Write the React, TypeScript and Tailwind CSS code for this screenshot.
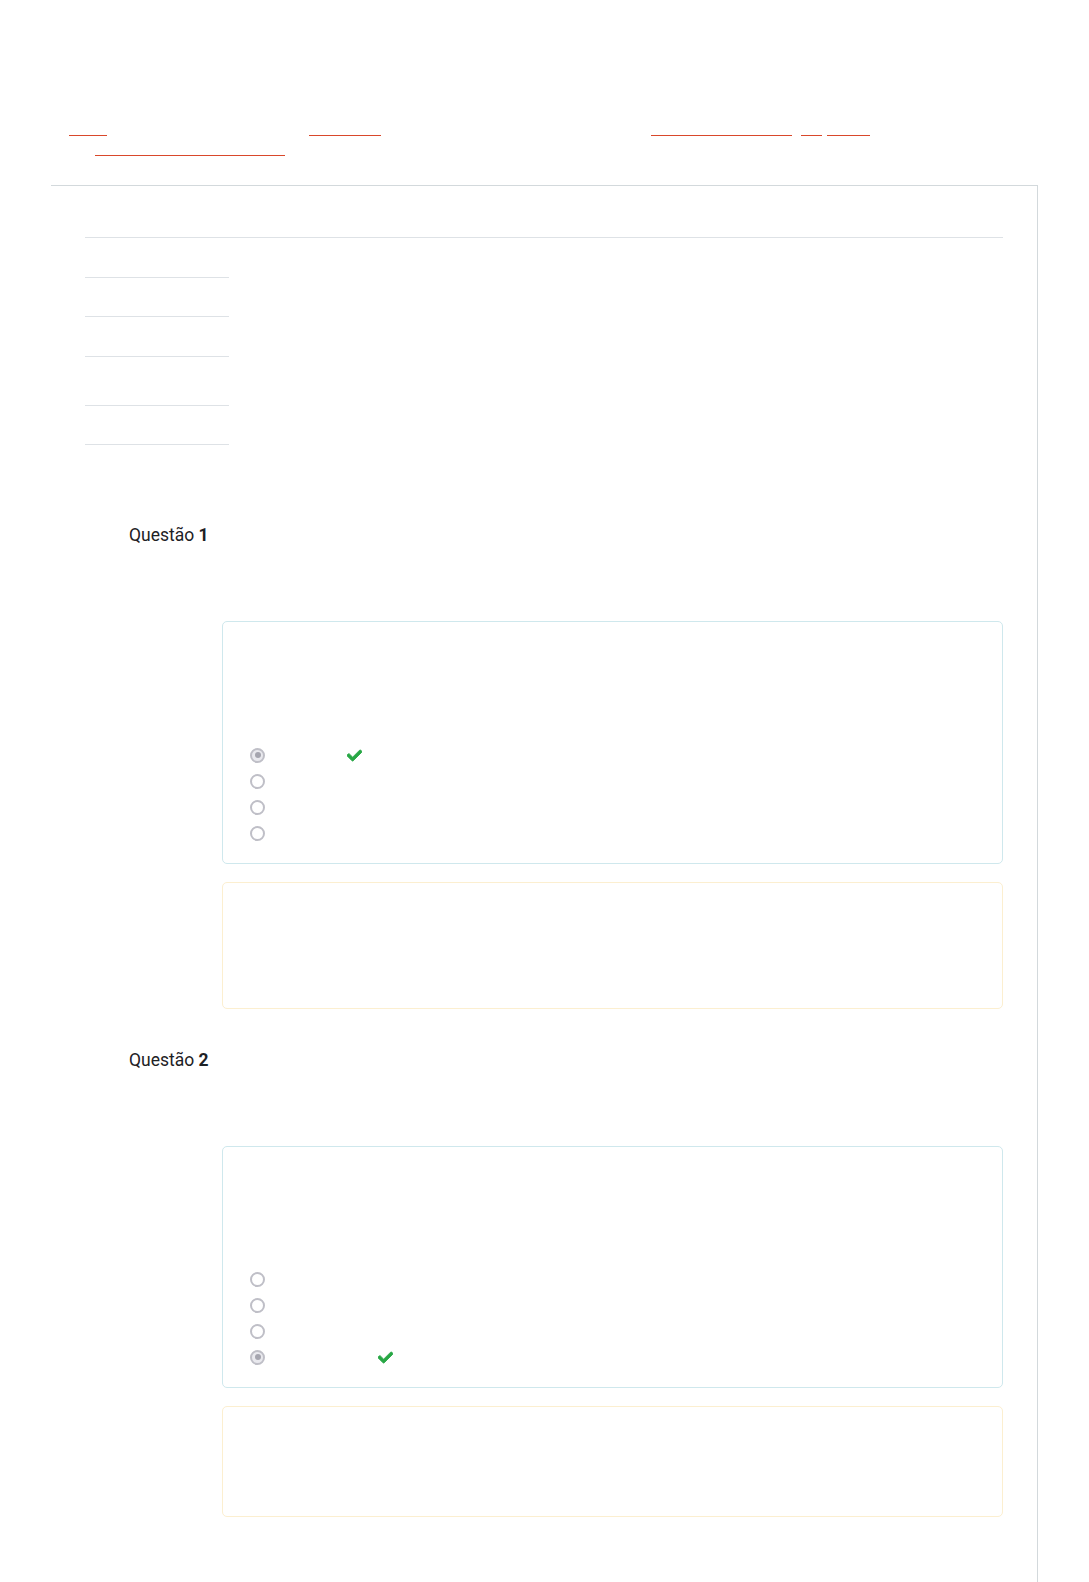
import { FaCheck } from "react-icons/fa";

const Link = ({ w, ml }: { w: string; ml: string }) => (
  <span className={`block h-px bg-[#d9482b] ${w} ${ml}`}></span>
);

const Radio = ({ checked }: { checked?: boolean }) => (
  <span
    className={`flex items-center justify-center w-[15px] h-[15px] rounded-full border-2 border-[#bfbfc7] shrink-0 ${
      checked ? "bg-[#e9e9ee]" : "bg-white"
    }`}
  >
    {checked && <span className="block w-[6px] h-[6px] rounded-full bg-[#a5a5af]"></span>}
  </span>
);

type Q = {
  num: number;
  correct: number;
  checkMl: string;
  boxPt: string;
  feedbackH: string;
  mt: string;
};

const Question = ({ q }: { q: Q }) => (
  <div className={q.mt}>
    <h3 className="ml-[44px] text-[17.5px] leading-[24px] text-[#1d2125] font-normal">
      Questão <span className="font-bold">{q.num}</span>
    </h3>
    <div className="ml-[137px] mt-[74px]">
      <div className={`border border-[#cfe8ed] rounded-[5px] pl-[27px] pb-[17px] ${q.boxPt}`}>
        {[0, 1, 2, 3].map((i) => (
          <div key={i} className="flex items-center h-[26px]">
            <Radio checked={i === q.correct} />
            {i === q.correct && (
              <FaCheck
                size={15}
                stroke="currentColor"
                strokeWidth={30}
                className={`text-[#28a745] ${q.checkMl}`}
              />
            )}
          </div>
        ))}
      </div>
      <div className={`mt-[18px] border border-[#fcefd0] rounded-[5px] ${q.feedbackH}`}></div>
    </div>
  </div>
);

const questions: Q[] = [
  { num: 1, correct: 0, checkMl: "ml-[82px]", boxPt: "pt-[120px]", feedbackH: "h-[127px]", mt: "mt-[78px]" },
  { num: 2, correct: 3, checkMl: "ml-[113px]", boxPt: "pt-[119px]", feedbackH: "h-[111px]", mt: "mt-[39px]" },
];

const rows = ["h-[40px]", "h-[39px]", "h-[40px]", "h-[49px]", "h-[39px]"];

export default function App() {
  return (
    <div className="w-[1089px] min-h-[1582px] bg-white overflow-hidden font-['Roboto','Liberation_Sans',sans-serif]">
      <div className="flex pt-[135px] pl-[69px]">
        <Link w="w-[38px]" ml="ml-0" />
        <Link w="w-[72px]" ml="ml-[202px]" />
        <Link w="w-[141px]" ml="ml-[270px]" />
        <Link w="w-[21px]" ml="ml-[9px]" />
        <Link w="w-[43px]" ml="ml-[5px]" />
      </div>
      <div className="flex mt-[19px] pl-[95px]">
        <Link w="w-[190px]" ml="ml-0" />
      </div>

      <div className="ml-[51px] mt-[29px] w-[987px] min-h-[1397px] border-t border-r border-[#d3d9dc] pt-[51px] pl-[34px] pr-[34px] pb-[60px]">
        <div className="border-t border-[#dee2e6]"></div>
        <div className="w-[144px]">
          {rows.map((h, i) => (
            <div key={i} className={`${h} border-b border-[#dee2e6]`}></div>
          ))}
        </div>

        {questions.map((q) => (
          <Question key={q.num} q={q} />
        ))}
      </div>
    </div>
  );
}
